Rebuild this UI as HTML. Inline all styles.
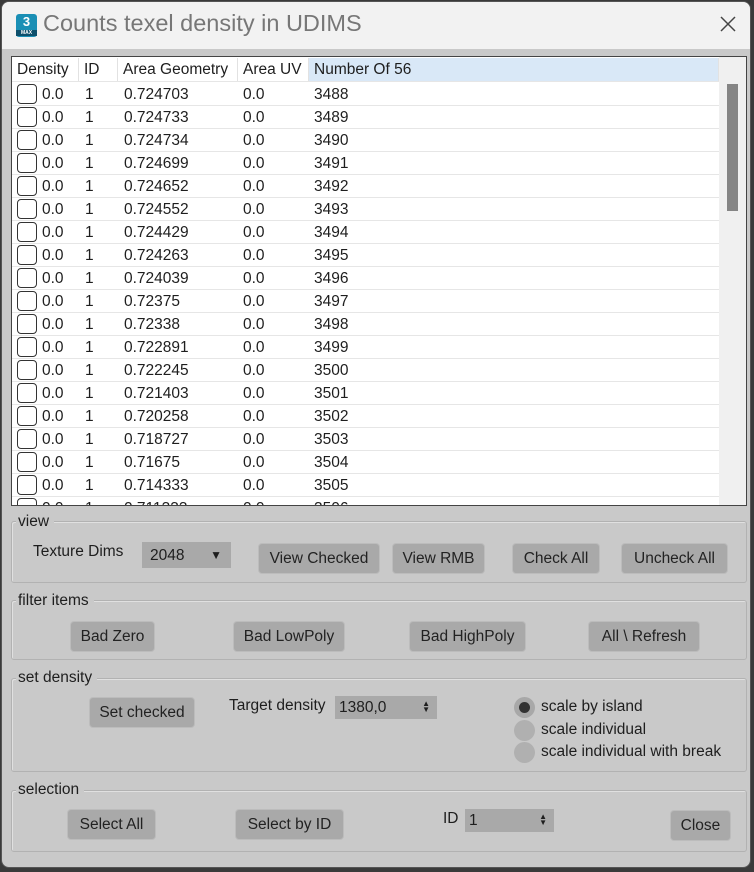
<!DOCTYPE html>
<html><head><meta charset="utf-8"><style>
*{box-sizing:border-box;margin:0;padding:0}
body{width:754px;height:872px;background:#3a3a3a;font-family:"Liberation Sans","DejaVu Sans",sans-serif;font-size:15.5px;color:#1e1e1e;position:relative;overflow:hidden}
.win{position:absolute;left:1px;top:1px;width:750px;height:867px;background:#c9c9c9;border:1px solid #555;border-radius:8px;overflow:hidden}
.title{position:absolute;left:0;top:0;width:100%;height:47px;background:#f2f2f2}
.title .t{position:absolute;left:41px;top:8px;font-size:23.5px;color:#777}
.logo{position:absolute;left:14px;top:12px;width:21px;height:23px;background:#1a8fb5;border-radius:3px;color:#fff;font-size:13px;font-weight:bold;text-align:center;line-height:16px}
.logo i{position:absolute;left:0;bottom:1px;width:100%;font-size:5px;line-height:6px;font-style:normal;background:#0d4f6b}
.x{position:absolute;left:716px;top:12px}
.tbl{position:absolute;left:9px;top:54px;width:736px;height:450px;background:#fff;border:1px solid #444;overflow:hidden}
.row{position:absolute;left:0;height:23px;width:707px;border-bottom:1px solid #e6e6e6}
.c{position:absolute;top:0;height:23px;line-height:23px;white-space:nowrap}
.hd .c{border-right:1px solid #e2e2e2;padding-left:5px}
.cb{position:absolute;left:5px;top:1px;width:20px;height:20px;border:1px solid #333;border-radius:4px;background:#fff}
.sb{position:absolute;left:707px;top:0;width:28px;height:450px;background:#f0f0f0}
.th{position:absolute;left:8px;top:27px;width:11px;height:127px;background:#858585}
.grp{position:absolute;left:9px;width:736px;border:1px solid #b2b2b2;border-radius:3px;box-shadow:1px 1px 0 #e0e0e0 inset}
.lbl{position:absolute;background:#c9c9c9;padding:0 5px 0 2px;font-size:15.5px}
.btn{position:absolute;height:31px;background:#a9a9a9;border:1px solid #bcbcbc;border-radius:4px;text-align:center;line-height:30px;color:#222}
.sp{position:absolute;background:#a9a9a9;height:23px;line-height:24px;padding-left:4px}
.ar{position:absolute;right:7px;top:5px;font-size:8px;line-height:6px}
.rd{position:absolute;width:21px;height:21px;border-radius:50%;background:#b0b0b0}
.txt{position:absolute;white-space:nowrap}
</style></head><body>
<div class="win">
<div class="title"><div class="logo">3<i>MAX</i></div><div class="t">Counts texel density in UDIMS</div>
<svg class="x" width="20" height="20"><path d="M3 3L17 17M17 3L3 17" stroke="#444" stroke-width="1.5"/></svg></div>
<div class="tbl">
<div class="row hd" style="top:1px;height:24px;background:#fff">
<div class="c" style="left:0;width:67px">Density</div><div class="c" style="left:67px;width:39px">ID</div><div class="c" style="left:106px;width:120px">Area Geometry</div><div class="c" style="left:226px;width:71px">Area UV</div><div class="c" style="left:297px;width:410px;background:#d9e8f7">Number Of 56</div></div>
<div id="rows"></div>
<div class="sb"><div class="th"></div></div>
</div>

<div class="grp" style="top:519px;height:62px"></div><div class="lbl" style="left:14px;top:511px">view</div>
<div class="txt" style="left:31px;top:541px">Texture Dims</div>
<div class="sp" style="left:140px;top:540px;width:89px;height:26px;line-height:27px;padding-left:8px">2048<span style="position:absolute;right:9px;top:0;font-size:12px">▼</span></div>
<div class="btn" style="left:256px;top:541px;width:122px">View Checked</div>
<div class="btn" style="left:390px;top:541px;width:93px">View RMB</div>
<div class="btn" style="left:510px;top:541px;width:88px">Check All</div>
<div class="btn" style="left:619px;top:541px;width:107px">Uncheck All</div>

<div class="grp" style="top:598px;height:60px"></div><div class="lbl" style="left:14px;top:590px">filter items</div>
<div class="btn" style="left:68px;top:619px;width:85px">Bad Zero</div>
<div class="btn" style="left:231px;top:619px;width:112px">Bad LowPoly</div>
<div class="btn" style="left:407px;top:619px;width:117px">Bad HighPoly</div>
<div class="btn" style="left:586px;top:619px;width:112px">All \ Refresh</div>

<div class="grp" style="top:676px;height:94px"></div><div class="lbl" style="left:14px;top:667px">set density</div>
<div class="btn" style="left:87px;top:695px;width:106px">Set checked</div>
<div class="txt" style="left:227px;top:695px">Target density</div>
<div class="sp" style="left:333px;top:694px;width:102px">1380,0<span class="ar">▲<br>▼</span></div>
<div class="rd" style="left:512px;top:695px;background:#a8a8a8"><div style="position:absolute;left:5px;top:5px;width:11px;height:11px;border-radius:50%;background:#333"></div></div>
<div class="rd" style="left:512px;top:718px"></div>
<div class="rd" style="left:512px;top:740px"></div>
<div class="txt" style="left:539px;top:696px">scale by island</div>
<div class="txt" style="left:539px;top:719px">scale individual</div>
<div class="txt" style="left:539px;top:741px">scale individual with break</div>

<div class="grp" style="top:788px;height:62px"></div><div class="lbl" style="left:14px;top:779px">selection</div>
<div class="btn" style="left:65px;top:807px;width:89px">Select All</div>
<div class="btn" style="left:233px;top:807px;width:109px">Select by ID</div>
<div class="txt" style="left:441px;top:808px">ID</div>
<div class="sp" style="left:463px;top:807px;width:89px">1<span class="ar">▲<br>▼</span></div>
<div class="btn" style="left:668px;top:808px;width:61px">Close</div>
</div>
<script>
var g=["0.724703","0.724733","0.724734","0.724699","0.724652","0.724552","0.724429","0.724263","0.724039","0.72375","0.72338","0.722891","0.722245","0.721403","0.720258","0.718727","0.71675","0.714333","0.711333"];
var h="";for(var i=0;i<g.length;i++){var t=26+i*23;h+='<div class="row" style="top:'+t+'px"><div class="cb"></div><div class="c" style="left:30px">0.0</div><div class="c" style="left:73px">1</div><div class="c" style="left:112px">'+g[i]+'</div><div class="c" style="left:231px">0.0</div><div class="c" style="left:302px">'+(3488+i)+'</div></div>';}
document.getElementById("rows").innerHTML=h;
</script>
</body></html>
